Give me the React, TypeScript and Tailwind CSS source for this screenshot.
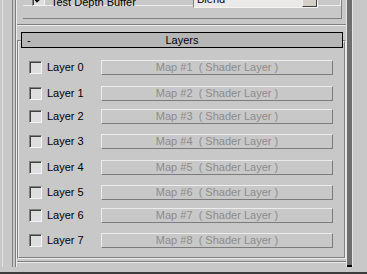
import React from 'react';

const font = { fontFamily: '"Liberation Sans", Arial, sans-serif' };

// gap above each layer row (px), taken from the reference
const layers = [
  { name: 'Layer 0', map: 'Map #1', gap: 'mt-[18px]' },
  { name: 'Layer 1', map: 'Map #2', gap: 'mt-[11px]' },
  { name: 'Layer 2', map: 'Map #3', gap: 'mt-[8px]' },
  { name: 'Layer 3', map: 'Map #4', gap: 'mt-[10px]' },
  { name: 'Layer 4', map: 'Map #5', gap: 'mt-[11px]' },
  { name: 'Layer 5', map: 'Map #6', gap: 'mt-[10px]' },
  { name: 'Layer 6', map: 'Map #7', gap: 'mt-[8px]' },
  { name: 'Layer 7', map: 'Map #8', gap: 'mt-[10px]' },
];

const CheckBox: React.FC<{ checked?: boolean }> = ({ checked }) => (
  <div className="flex h-[13px] w-[13px] shrink-0 items-center justify-center border-t border-l border-t-[#808080] border-l-[#808080] border-r border-b border-r-[#f4f4f4] border-b-[#f4f4f4] bg-[#dedede] shadow-[inset_1px_1px_0_#404040]">
    {checked && (
      <svg width="9" height="9" viewBox="0 0 9 9">
        <path d="M1 4 L3 6.5 L8 1.5" stroke="#000" strokeWidth="1.8" fill="none" />
      </svg>
    )}
  </div>
);

const LayerRow: React.FC<{ name: string; map: string; gap: string }> = ({ name, map, gap }) => (
  <div className={`flex h-[15px] items-center ${gap}`}>
    <div className="ml-[10px]">
      <CheckBox />
    </div>
    <div className="w-[59px] pl-[5px] text-[11px] leading-none text-black">{name}</div>
    <div className="flex h-[15px] w-[232px] items-center justify-center border-t border-l border-t-[#ececec] border-l-[#ececec] border-r border-b border-r-[#7c7c7c] border-b-[#7c7c7c] bg-[#c8c8c8] text-[11px] leading-none whitespace-pre text-[#8c8c8c]">
      {`${map}  ( Shader Layer )`}
    </div>
  </div>
);

export default function App() {
  return (
    <div className="flex h-[274px] w-[367px] flex-col overflow-hidden bg-[#c8c8c8]" style={font}>
      <div className="flex h-[272px]">
        {/* left margin */}
        <div className="flex h-[267px] w-[12px]">
          <div className="ml-[2px] w-px bg-[#e2e2e2]" />
        </div>
        <div className="h-[267px] w-px bg-[#808080]" />
        <div className="h-[267px] w-[2px]" />
        {/* rollout column */}
        <div className="flex h-[267px] w-[331px] flex-col border-l border-l-[#7c7c7c]">
          <div className="flex h-[267px] flex-col border-l border-l-[#ececec]">
            {/* top group box, cut off by the window */}
            <div className="ml-[6px] h-[19px] w-[319px] border-r border-b border-r-[#808080] border-b-[#808080]">
              <div className="h-[18px] w-[318px] border-r border-b border-r-[#ececec] border-b-[#ececec]">
                <div className="-mt-[12px] flex h-[20px] items-end">
                  <div className="mb-[2px] ml-[9px]">
                    <CheckBox checked />
                  </div>
                  <div className="mb-[-1px] pl-[6px] text-[11px] leading-[13px] text-black">Test Depth Buffer</div>
                  <div className="ml-auto mr-[22px] flex h-[20px] w-[125px] items-end border-t border-l border-t-[#808080] border-l-[#808080] border-r border-b border-r-[#f4f4f4] border-b-[#f4f4f4] bg-[#ebe8e8]">
                    <div className="pl-[3px] pb-[1px] text-[11px] leading-[13px] text-black">Blend</div>
                    <div className="ml-auto h-[16px] w-[15px] border-t border-l border-t-[#f0f0f0] border-l-[#f0f0f0] border-r border-b border-r-[#404040] border-b-[#404040] bg-[#d4d0c8]" />
                  </div>
                </div>
              </div>
            </div>

            {/* etched separator */}
            <div className="mt-[5px] h-px w-full bg-[#808080]" />
            <div className="h-px w-full bg-[#ececec]" />

            {/* rollout title bar */}
            <div className="relative z-10 mt-[6px] ml-[4px] grid h-[16px] w-[322px] grid-cols-[20px_1fr_20px] items-center border border-black bg-[#b6b6b6] text-[11px] leading-none text-black">
              <span className="pl-[5px]">-</span>
              <span className="text-center">Layers</span>
              <span />
            </div>

            {/* layers group box */}
            <div className="-mt-[8px] w-[329px] border-t border-l border-t-[#808080] border-l-[#808080] border-r border-b border-r-[#ececec] border-b-[#ececec]">
              <div className="flex flex-col border-t border-l border-t-[#ececec] border-l-[#ececec] border-r border-b border-r-[#808080] border-b-[#808080] pb-[9px]">
                {layers.map((l) => (
                  <LayerRow key={l.name} name={l.name} map={l.map} gap={l.gap} />
                ))}
              </div>
            </div>

            <div className="mt-[2px] h-px w-full bg-[#808080]" />
            <div className="h-px w-full bg-[#ececec]" />
          </div>
        </div>
        {/* scroll bar */}
        <div className="h-[267px] w-px bg-[#e6e6e6]" />
        <div className="flex h-[267px] w-[5px] flex-col bg-[#6e6e6e]">
          <div className="mt-auto h-[2px] bg-black" />
        </div>
        <div className="h-[267px] w-px bg-[#e6e6e6]" />
      </div>
      <div className="h-[2px] bg-[#3c3c3c]" />
    </div>
  );
}
